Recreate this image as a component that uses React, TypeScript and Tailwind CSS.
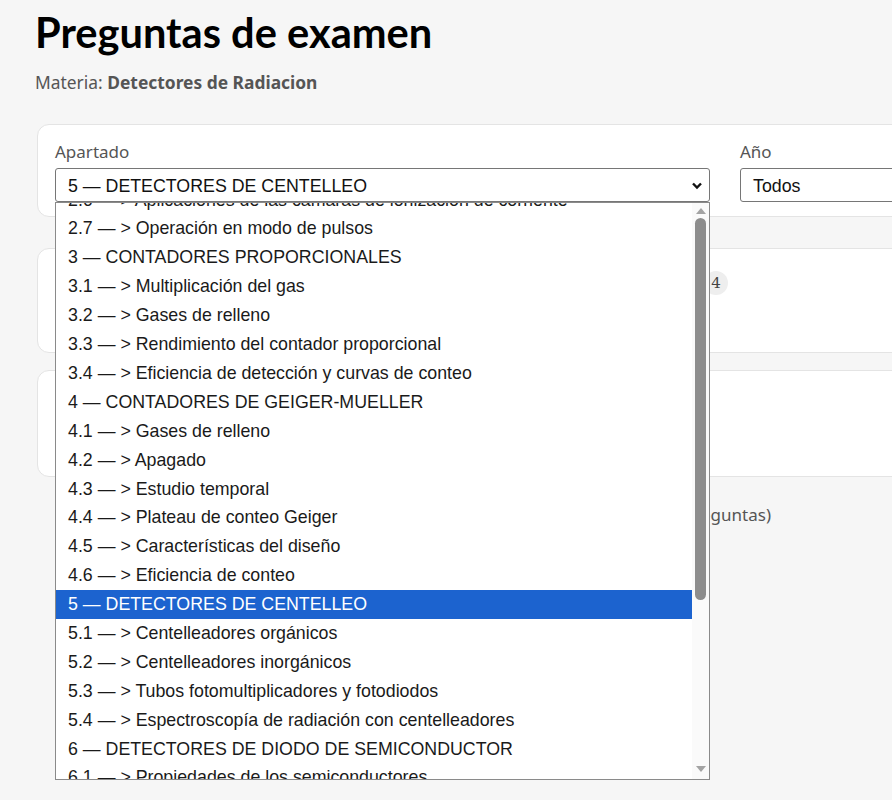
import React from "react";

const rows: { t: string; sel?: boolean }[] = [
  { t: "2.6 — > Aplicaciones de las cámaras de ionización de corriente" },
  { t: "2.7 — > Operación en modo de pulsos" },
  { t: "3 — CONTADORES PROPORCIONALES" },
  { t: "3.1 — > Multiplicación del gas" },
  { t: "3.2 — > Gases de relleno" },
  { t: "3.3 — > Rendimiento del contador proporcional" },
  { t: "3.4 — > Eficiencia de detección y curvas de conteo" },
  { t: "4 — CONTADORES DE GEIGER-MUELLER" },
  { t: "4.1 — > Gases de relleno" },
  { t: "4.2 — > Apagado" },
  { t: "4.3 — > Estudio temporal" },
  { t: "4.4 — > Plateau de conteo Geiger" },
  { t: "4.5 — > Características del diseño" },
  { t: "4.6 — > Eficiencia de conteo" },
  { t: "5 — DETECTORES DE CENTELLEO", sel: true },
  { t: "5.1 — > Centelleadores orgánicos" },
  { t: "5.2 — > Centelleadores inorgánicos" },
  { t: "5.3 — > Tubos fotomultiplicadores y fotodiodos" },
  { t: "5.4 — > Espectroscopía de radiación con centelleadores" },
  { t: "6 — DETECTORES DE DIODO DE SEMICONDUCTOR" },
  { t: "6.1 — > Propiedades de los semiconductores" },
  { t: "6.2 — > Unión p-n" },
];

function Chevron() {
  return (
    <svg width="12" height="8" viewBox="0 0 12 8" className="shrink-0">
      <polyline points="2,1.5 6,5.5 10,1.5" fill="none" stroke="#111" strokeWidth="2.4" />
    </svg>
  );
}

export default function App() {
  return (
    <div className="min-h-[800px] w-full overflow-hidden bg-[#f6f6f6] font-['Noto_Sans',sans-serif]">
      <div className="pl-[35px] pt-[6px]">
        <h1 className="font-['Lato',sans-serif] text-[41.6px] font-bold leading-[52px] text-black">Preguntas de examen</h1>
        <p className="mt-[12px] text-[17.4px] leading-[24px] text-[#555]">
          Materia: <span className="font-bold text-[#555]">Detectores de Radiacion</span>
        </p>

        <div className="mt-[30px] ml-[2px] w-[960px] rounded-[12px] border border-[#e4e4e4] bg-white pl-[17px] pt-[14px] pb-[14px]">
          <div className="flex gap-[30px]">
            <div className="relative w-[655px] shrink-0">
              <div className="text-[17px] leading-[26px] text-[#555]">Apartado</div>
              <div className="mt-[3px] flex h-[34px] items-center justify-between rounded-[3px] border border-[#767676] bg-white pl-[12px] pr-[6px] pt-[2px] font-['Liberation_Sans',Arial,sans-serif] text-[17.8px] text-[#111]">
                <span>5 — DETECTORES DE CENTELLEO</span>
                <Chevron />
              </div>

              <div className="absolute left-0 top-[63px] z-10 flex h-[578px] w-[655px] border border-[#8a8a8a] bg-white">
                <div className="h-full flex-1 overflow-hidden">
                  <div className="-mt-[17.5px]">
                    {rows.map((r, i) => (
                      <div
                        key={i}
                        className={
                          r.sel
                            ? "flex h-[28.9px] items-center whitespace-nowrap bg-[#1c63cf] pl-[12px] font-['Liberation_Sans',Arial,sans-serif] text-[17.8px] text-white"
                            : "flex h-[28.9px] items-center whitespace-nowrap pl-[12px] font-['Liberation_Sans',Arial,sans-serif] text-[17.8px] text-[#1a1a1a]"
                        }
                      >
                        {r.t}
                      </div>
                    ))}
                  </div>
                </div>
                <div className="flex h-full w-[17px] flex-col items-center bg-[#fafafa]">
                  <svg width="10" height="6" viewBox="0 0 10 6" className="mt-[5px]">
                    <polygon points="5,0 10,6 0,6" fill="#a3a3a3" />
                  </svg>
                  <div className="mt-[4px] h-[382px] w-[11px] rounded-full bg-[#8d8d8d]" />
                  <div className="flex-1" />
                  <svg width="10" height="6" viewBox="0 0 10 6" className="mb-[7px]">
                    <polygon points="0,0 10,0 5,6" fill="#a3a3a3" />
                  </svg>
                </div>
              </div>
            </div>

            <div className="w-[200px] shrink-0">
              <div className="text-[17px] leading-[26px] text-[#555]">Año</div>
              <div className="mt-[3px] flex h-[34px] items-center rounded-[3px] border border-[#767676] bg-white pl-[12px] pt-[2px] font-['Liberation_Sans',Arial,sans-serif] text-[17.8px] text-[#111]">
                Todos
              </div>
            </div>
          </div>
        </div>

        <div className="mt-[31px] ml-[2px] flex h-[105px] w-[960px] items-start rounded-[12px] border border-[#e4e4e4] bg-white pl-[18px] pt-[22px]">
          <span className="w-[648px] shrink-0 text-[17px] leading-[24px] text-[#333]">Total de preguntas del apartado</span>
          <span className="flex h-[24px] w-[24px] shrink-0 items-center justify-center rounded-full bg-[#eeeeee] font-['DejaVu_Serif',serif] text-[15px] text-[#444]">4</span>
        </div>

        <div className="mt-[17px] ml-[2px] h-[107px] w-[960px] rounded-[12px] border border-[#e4e4e4] bg-white" />

        <div className="mt-[26px] w-[736px] text-right text-[17px] leading-[24px] text-[#555]">
          Mostrando 4 preguntas (de 4 preguntas)
        </div>
      </div>
    </div>
  );
}
